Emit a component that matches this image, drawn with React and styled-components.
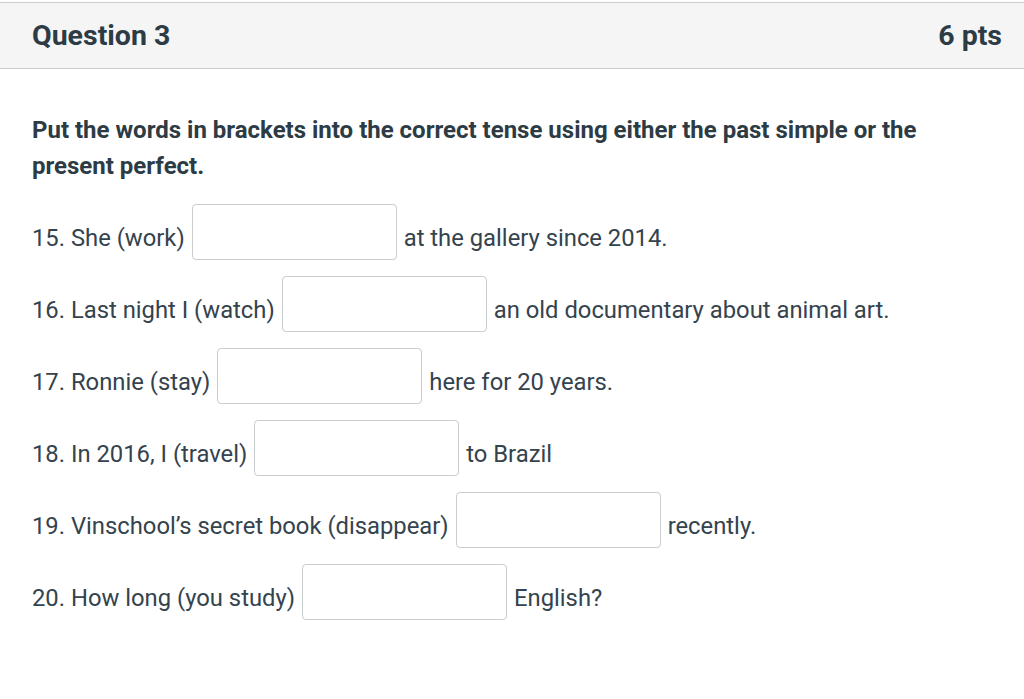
import styled, { createGlobalStyle } from 'styled-components';

const GlobalStyle = createGlobalStyle`
  body {
    margin: 0;
    background: #ffffff;
    font-family: Roboto, "Liberation Sans", Arial, sans-serif;
    color: #2d3b45;
  }
`;

const Page = styled.div`
  padding-top: 2px;
`;

const Header = styled.div`
  display: flex;
  align-items: center;
  justify-content: space-between;
  height: 65px;
  padding: 0 22px 0 32px;
  background-color: #f5f5f5;
  border-top: 1px solid #c7cdd1;
  border-bottom: 1px solid #c7cdd1;
`;

const Title = styled.h2`
  margin: 0;
  font-size: 28.5px;
  font-weight: 700;
  color: #2d3b45;
`;

const Points = styled.span`
  font-size: 28.5px;
  font-weight: 700;
  color: #2d3b45;
`;

const Body = styled.div`
  padding: 43px 32px 0 32px;
`;

const Instructions = styled.p`
  margin: 0 0 18px 0;
  font-size: 24px;
  font-weight: 700;
  line-height: 36px;
`;

const Row = styled.div`
  display: flex;
  align-items: center;
  gap: 7px;
  height: 72px;
  font-size: 23.8px;
  color: #34434d;
`;

const Blank = styled.input`
  box-sizing: border-box;
  width: 205px;
  height: 56px;
  margin: 0 0 13px 0;
  padding: 0 10px;
  border: 1px solid #c7cdd1;
  border-radius: 4px;
  background: #ffffff;
  font: inherit;
`;

const questions = [
  ['15. She (work)', 'at the gallery since 2014.'],
  ['16. Last night I (watch)', 'an old documentary about animal art.'],
  ['17. Ronnie (stay)', 'here for 20 years.'],
  ['18. In 2016, I (travel)', 'to Brazil'],
  ['19. Vinschool\u2019s secret book (disappear)', 'recently.'],
  ['20. How long (you study)', 'English?'],
];

export default function App() {
  return (
    <Page>
      <GlobalStyle />
      <Header>
        <Title>Question 3</Title>
        <Points>6 pts</Points>
      </Header>
      <Body>
        <Instructions>
          Put the words in brackets into the correct tense using either the past simple or the present perfect.
        </Instructions>
        {questions.map(([before, after]) => (
          <Row key={before}>
            <span>{before}</span>
            <Blank type="text" />
            <span>{after}</span>
          </Row>
        ))}
      </Body>
    </Page>
  );
}
